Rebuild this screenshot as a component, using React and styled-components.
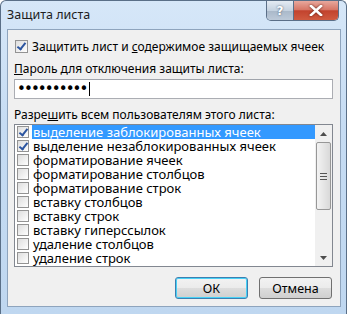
import styled, { createGlobalStyle } from 'styled-components';

const GlobalStyle = createGlobalStyle`
  html, body { margin: 0; padding: 0; background: #ffffff; }
  body { font-family: "Noto Sans", "Open Sans", sans-serif; }
`;

const permissions = [
  { label: 'выделение заблокированных ячеек', checked: true, selected: true },
  { label: 'выделение незаблокированных ячеек', checked: true },
  { label: 'форматирование ячеек' },
  { label: 'форматирование столбцов' },
  { label: 'форматирование строк' },
  { label: 'вставку столбцов' },
  { label: 'вставку строк' },
  { label: 'вставку гиперссылок' },
  { label: 'удаление столбцов' },
  { label: 'удаление строк' },
];

export default function App() {
  return (
    <>
      <GlobalStyle />
      <Window>
        <TitleBar>
          <Title>Защита листа</Title>
          <Controls>
            <HelpButton>?</HelpButton>
            <CloseButton>
              <svg width="14" height="11" viewBox="0 0 14 11">
                <path
                  d="M2 1 L12 10 M12 1 L2 10"
                  stroke="#ffffff"
                  strokeWidth="2.6"
                  strokeLinecap="square"
                />
              </svg>
            </CloseButton>
          </Controls>
        </TitleBar>
        <Client>
          <CheckRow>
            <Box $checked $size={13} />
            <span>
              Защитить лист и <u>с</u>одержимое защищаемых ячеек
            </span>
          </CheckRow>
          <Label>
            <u>П</u>ароль для отключения защиты листа:
          </Label>
          <PasswordField>
            ••••••••••<Caret />
          </PasswordField>
          <Label $top={9}>
            Разре<u>ш</u>ить всем пользователям этого листа:
          </Label>
          <ListBox>
            <Items>
              {permissions.map((p) => (
                <Item key={p.label}>
                  <Box $checked={p.checked} $size={12} />
                  <ItemText $selected={p.selected}>{p.label}</ItemText>
                </Item>
              ))}
            </Items>
            <ScrollBar>
              <Arrow>
                <svg width="7" height="4" viewBox="0 0 7 4">
                  <path d="M0 4 L3.5 0 L7 4 Z" fill="#4d4d4d" />
                </svg>
              </Arrow>
              <Thumb>
                <Grip />
                <Grip />
                <Grip />
              </Thumb>
              <Track />
              <Arrow>
                <svg width="7" height="4" viewBox="0 0 7 4">
                  <path d="M0 0 L7 0 L3.5 4 Z" fill="#4d4d4d" />
                </svg>
              </Arrow>
            </ScrollBar>
          </ListBox>
          <Buttons>
            <Button $default>ОК</Button>
            <Button>Отмена</Button>
          </Buttons>
        </Client>
      </Window>
    </>
  );
}

const Window = styled.div`
  width: 347px;
  height: 314px;
  box-sizing: border-box;
  display: flex;
  flex-direction: column;
  background: linear-gradient(180deg, #d6e7f8 0%, #c6dcf3 40%, #bfd7f0 100%);
  border-radius: 6px 6px 0 0;
  border: 1px solid #5a6f87;
  border-bottom: none;
  overflow: hidden;
`;

const TitleBar = styled.div`
  height: 28px;
  flex: none;
  display: flex;
  justify-content: space-between;
  align-items: flex-start;
`;

const Title = styled.div`
  margin: 5px 0 0 6px;
  font-size: 12.5px;
  color: #1e1e1e;
`;

const Controls = styled.div`
  display: flex;
  margin-right: 7px;
  border: 1px solid #5b6f88;
  border-top: none;
  border-radius: 0 0 5px 5px;
  overflow: hidden;
  height: 19px;
`;

const HelpButton = styled.div`
  width: 26px;
  display: flex;
  justify-content: center;
  align-items: center;
  font-family: "DejaVu Sans", sans-serif;
  font-weight: bold;
  font-size: 12px;
  color: #ffffff;
  text-shadow: 0 0 2px #394a63;
  background: linear-gradient(180deg, #e4ebf3 0%, #c5d2e0 50%, #a9b8c9 51%, #bcc9d8 100%);
  border-right: 1px solid #5b6f88;
`;

const CloseButton = styled.div`
  width: 44px;
  display: flex;
  justify-content: center;
  align-items: center;
  background: linear-gradient(180deg, #e8a89d 0%, #d77767 45%, #c2432e 52%, #d05a40 100%);
  svg { filter: drop-shadow(0 0 1px #5b1b10); }
`;

const Client = styled.div`
  flex: 1;
  margin: 0 5px 7px 6px;
  background: #f0f0f0;
  border: 1px solid #8ea4bd;
  padding: 9px 7px 0 6px;
  display: flex;
  flex-direction: column;
  font-size: 12px;
  color: #000;
`;

const CheckRow = styled.div`
  display: flex;
  align-items: center;
  gap: 4px;
  height: 14px;
  margin-left: 1px;
  span { white-space: nowrap; }
`;

const Box = styled.div`
  width: ${(p) => p.$size}px;
  height: ${(p) => p.$size}px;
  flex: none;
  box-sizing: border-box;
  border: 1px solid #939393;
  background: linear-gradient(135deg, #dedede 0%, #f4f4f4 70%, #ffffff 100%);
  position: relative;
  &::after {
    content: '';
    display: ${(p) => (p.$checked ? 'block' : 'none')};
    position: absolute;
    left: 3px;
    top: 0px;
    width: 3px;
    height: 7px;
    border: solid #2c55a0;
    border-width: 0 2px 2px 0;
    transform: rotate(38deg);
  }
`;

const Label = styled.div`
  margin-top: ${(p) => p.$top ?? 9}px;
  height: 14px;
  line-height: 14px;
  white-space: nowrap;
`;

const PasswordField = styled.div`
  margin-top: 3px;
  height: 20px;
  box-sizing: border-box;
  border: 1px solid #abadb3;
  border-top-color: #a0a4ab;
  background: #fff;
  display: flex;
  align-items: center;
  padding-left: 2px;
  font-size: 15px;
  letter-spacing: -1.9px;
  font-family: "DejaVu Sans", sans-serif;
`;

const Caret = styled.span`
  display: inline-block;
  width: 1px;
  height: 14px;
  background: #000;
  margin-left: 3px;
`;

const ListBox = styled.div`
  margin-top: 2px;
  height: 143px;
  box-sizing: border-box;
  border: 1px solid #828790;
  background: #fff;
  display: flex;
`;

const Items = styled.div`
  flex: 1;
  overflow: hidden;
`;

const Item = styled.div`
  height: 14px;
  display: flex;
  align-items: center;
  padding-left: 2px;
  gap: 3px;
`;

const ItemText = styled.div`
  flex: 1;
  height: 14px;
  line-height: 14px;
  font-size: 13px;
  padding-left: 1px;
  white-space: nowrap;
  background: ${(p) => (p.$selected ? '#3399ff' : 'transparent')};
  color: ${(p) => (p.$selected ? '#ffffff' : '#000000')};
`;

const ScrollBar = styled.div`
  width: 17px;
  flex: none;
  background: #f0f0f0;
  display: flex;
  flex-direction: column;
  align-items: center;
`;

const Arrow = styled.div`
  height: 17px;
  width: 17px;
  display: flex;
  justify-content: center;
  align-items: center;
`;

const Thumb = styled.div`
  width: 15px;
  height: 68px;
  box-sizing: border-box;
  border: 1px solid #979797;
  border-radius: 2px;
  background: linear-gradient(90deg, #f3f3f3 0%, #e6e6e6 50%, #d9d9d9 100%);
  display: flex;
  flex-direction: column;
  justify-content: center;
  align-items: center;
  gap: 2px;
`;

const Grip = styled.div`
  width: 7px;
  height: 1px;
  background: #555;
`;

const Track = styled.div`
  flex: 1;
`;

const Buttons = styled.div`
  display: flex;
  justify-content: flex-end;
  gap: 11px;
  margin-top: 10px;
  padding-right: 1px;
`;

const Button = styled.div`
  width: 73px;
  height: 22px;
  box-sizing: border-box;
  border: 1px solid ${(p) => (p.$default ? '#3c7fb1' : '#707070')};
  box-shadow: ${(p) => (p.$default ? 'inset 0 0 0 1px #48d1f6' : 'none')};
  border-radius: 3px;
  background: linear-gradient(180deg, #f2f2f2 0%, #ebebeb 50%, #dddddd 51%, #cfcfcf 100%);
  display: flex;
  justify-content: center;
  align-items: center;
  font-size: 12.5px;
`;
